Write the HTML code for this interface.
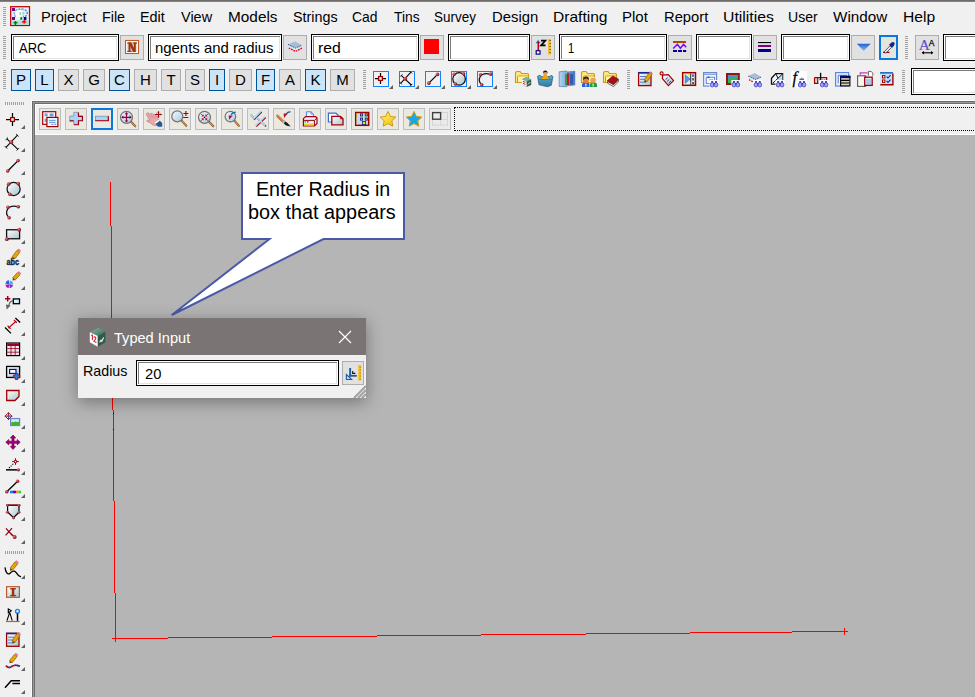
<!DOCTYPE html><html><head><meta charset="utf-8"><title>Typed Input</title><style>
html,body{margin:0;padding:0}
body{width:975px;height:697px;overflow:hidden;background:#f0f0f0;position:relative;font-family:"Liberation Sans",sans-serif;font-size:15px;color:#000}
.a{position:absolute}
.t{position:absolute;white-space:nowrap;line-height:17px;height:17px;transform-origin:0 50%}
.in{position:absolute;box-sizing:border-box;background:#fff;border:1px solid #000;box-shadow:inset 0 0 0 1px #fff, inset 2px 2px 0 0 #7c7c7c, inset -1px -1px 0 1px #e3e3e3}
.bt{position:absolute;box-sizing:border-box;background:#e1e1e1;border:1px solid #adadad}
.bs{position:absolute;box-sizing:border-box;background:#cce4f7;border:1px solid #005499}
.lb{position:absolute;box-sizing:border-box;text-align:center;line-height:20px;font-size:15px}
.vb{position:absolute;box-sizing:border-box;width:22px;height:22px;background:#ebe8e0;border:1px solid #bdbdbd}
.gv{position:absolute;width:3px;background:repeating-linear-gradient(to bottom,#a0a0a0 0 1px,transparent 1px 2px)}
.gh{position:absolute;height:3px;background:repeating-linear-gradient(to right,#a0a0a0 0 1px,transparent 1px 2px)}
.tri{position:absolute;width:0;height:0;border-left:4px solid transparent;border-bottom:4px solid #606060}
.sq{position:absolute;box-sizing:border-box;width:16px;height:16px;border:1px solid #1482ff}
</style></head><body>
<div class="a" style="left:0;top:0;width:975px;height:1px;background:#6f6b6a"></div><div class="a" style="left:0;top:1px;width:975px;height:1px;background:#858180"></div>
<div class="gv" style="left:3px;top:7px;height:20px"></div>
<div class="t" style="left:40.52px;top:7.5px;font-size:15px;transform:scaleX(0.9760);">Project</div>
<div class="t" style="left:101.65px;top:7.5px;font-size:15px;transform:scaleX(0.9550);">File</div>
<div class="t" style="left:139.84px;top:7.5px;font-size:15px;transform:scaleX(0.9580);">Edit</div>
<div class="t" style="left:181.30px;top:7.5px;font-size:15px;transform:scaleX(0.9658);">View</div>
<div class="t" style="left:227.68px;top:7.5px;font-size:15px;transform:scaleX(1.0244);">Models</div>
<div class="t" style="left:292.60px;top:7.5px;font-size:15px;transform:scaleX(0.9549);">Strings</div>
<div class="t" style="left:352.00px;top:7.5px;font-size:15px;transform:scaleX(0.9273);">Cad</div>
<div class="t" style="left:393.60px;top:7.5px;font-size:15px;transform:scaleX(0.9201);">Tins</div>
<div class="t" style="left:434.10px;top:7.5px;font-size:15px;transform:scaleX(0.8965);">Survey</div>
<div class="t" style="left:491.81px;top:7.5px;font-size:15px;transform:scaleX(0.9901);">Design</div>
<div class="t" style="left:552.76px;top:7.5px;font-size:15px;transform:scaleX(1.0375);">Drafting</div>
<div class="t" style="left:622.00px;top:7.5px;font-size:15px;transform:scaleX(1.0008);">Plot</div>
<div class="t" style="left:663.62px;top:7.5px;font-size:15px;transform:scaleX(0.9832);">Report</div>
<div class="t" style="left:723.35px;top:7.5px;font-size:15px;transform:scaleX(1.0547);">Utilities</div>
<div class="t" style="left:788.26px;top:7.5px;font-size:15px;transform:scaleX(0.9389);">User</div>
<div class="t" style="left:833.30px;top:7.5px;font-size:15px;transform:scaleX(1.0165);">Window</div>
<div class="t" style="left:902.76px;top:7.5px;font-size:15px;transform:scaleX(1.0438);">Help</div>
<div class="gv" style="left:3px;top:36px;height:24px"></div>
<div class="in" style="left:11px;top:34px;width:108px;height:27px"></div>
<div class="bt" style="left:120px;top:35px;width:24px;height:25px"></div>
<div class="in" style="left:148px;top:34px;width:134px;height:27px"></div>
<div class="bt" style="left:283px;top:35px;width:24px;height:25px"></div>
<div class="in" style="left:311px;top:34px;width:108px;height:27px"></div>
<div class="bt" style="left:420px;top:35px;width:24px;height:25px"></div>
<div class="in" style="left:448px;top:34px;width:82px;height:27px"></div>
<div class="bt" style="left:531px;top:35px;width:24px;height:25px"></div>
<div class="in" style="left:559px;top:34px;width:108px;height:27px"></div>
<div class="bt" style="left:668px;top:35px;width:24px;height:25px"></div>
<div class="in" style="left:696px;top:34px;width:56px;height:27px"></div>
<div class="bt" style="left:753px;top:35px;width:24px;height:25px"></div>
<div class="in" style="left:781px;top:34px;width:69px;height:27px"></div>
<div class="bt" style="left:851px;top:35px;width:24px;height:25px"></div>
<div class="a" style="left:879px;top:35px;width:19px;height:25px;box-sizing:border-box;border:2px solid #0a78dc;background:#e6e4df"></div>
<div class="gv" style="left:905px;top:36px;height:24px"></div>
<div class="bt" style="left:915px;top:35px;width:24px;height:25px"></div>
<div class="in" style="left:943px;top:34px;width:47px;height:27px"></div>
<div class="t" style="left:19.10px;top:39px;font-size:15px;transform:scaleX(0.8638);">ARC</div>
<div class="t" style="left:155.41px;top:39px;font-size:15px;transform:scaleX(0.9936);">ngents and radius</div>
<div class="t" style="left:318.15px;top:39px;font-size:15px;transform:scaleX(1.0522);">red</div>
<div class="t" style="left:568.06px;top:39px;font-size:15px;transform:scaleX(0.7429);">1</div>
<div class="a" style="left:424px;top:39px;width:15px;height:15px;background:#ff0000"></div>
<div class="gv" style="left:3px;top:70px;height:20px"></div>
<div class="bs lb" style="left:11px;top:69px;width:20px;height:22px">P</div>
<div class="bs lb" style="left:35px;top:69px;width:19px;height:22px">L</div>
<div class="bt lb" style="left:58px;top:69px;width:21px;height:22px">X</div>
<div class="bt lb" style="left:83px;top:69px;width:22px;height:22px">G</div>
<div class="bs lb" style="left:109px;top:69px;width:21px;height:22px">C</div>
<div class="bt lb" style="left:134px;top:69px;width:23px;height:22px">H</div>
<div class="bt lb" style="left:161px;top:69px;width:20px;height:22px">T</div>
<div class="bt lb" style="left:185px;top:69px;width:20px;height:22px">S</div>
<div class="bs lb" style="left:209px;top:69px;width:16px;height:22px">I</div>
<div class="bt lb" style="left:229px;top:69px;width:23px;height:22px">D</div>
<div class="bs lb" style="left:256px;top:69px;width:19px;height:22px">F</div>
<div class="bt lb" style="left:279px;top:69px;width:22px;height:22px">A</div>
<div class="bs lb" style="left:305px;top:69px;width:21px;height:22px">K</div>
<div class="bt lb" style="left:330px;top:69px;width:25px;height:22px">M</div>
<div class="gv" style="left:363px;top:70px;height:20px"></div>
<div class="sq" style="left:373px;top:71px"></div><div class="tri" style="left:389px;top:85px"></div>
<div class="sq" style="left:399px;top:71px"></div><div class="tri" style="left:415px;top:85px"></div>
<div class="sq" style="left:425px;top:71px"></div><div class="tri" style="left:441px;top:85px"></div>
<div class="sq" style="left:451px;top:71px"></div><div class="tri" style="left:467px;top:85px"></div>
<div class="sq" style="left:477px;top:71px"></div><div class="tri" style="left:493px;top:85px"></div>
<div class="gv" style="left:505px;top:70px;height:20px"></div>
<div class="gv" style="left:627px;top:70px;height:20px"></div>
<div class="gv" style="left:902px;top:70px;height:24px"></div>
<div class="in" style="left:911px;top:68px;width:79px;height:27px"></div>
<div class="gh" style="left:5px;top:102px;width:20px"></div>
<div class="gh" style="left:5px;top:551px;width:20px"></div>
<div class="tri" style="left:21px;top:125px"></div>
<div class="tri" style="left:21px;top:148px"></div>
<div class="tri" style="left:21px;top:171px"></div>
<div class="tri" style="left:21px;top:194px"></div>
<div class="tri" style="left:21px;top:217px"></div>
<div class="tri" style="left:21px;top:240px"></div>
<div class="tri" style="left:21px;top:263px"></div>
<div class="tri" style="left:21px;top:286px"></div>
<div class="tri" style="left:21px;top:309px"></div>
<div class="tri" style="left:21px;top:332px"></div>
<div class="tri" style="left:21px;top:356px"></div>
<div class="tri" style="left:21px;top:379px"></div>
<div class="tri" style="left:21px;top:402px"></div>
<div class="tri" style="left:21px;top:425px"></div>
<div class="tri" style="left:21px;top:448px"></div>
<div class="tri" style="left:21px;top:471px"></div>
<div class="tri" style="left:21px;top:494px"></div>
<div class="tri" style="left:21px;top:517px"></div>
<div class="tri" style="left:21px;top:540px"></div>
<div class="tri" style="left:21px;top:575px"></div>
<div class="tri" style="left:21px;top:598px"></div>
<div class="tri" style="left:21px;top:621px"></div>
<div class="tri" style="left:21px;top:644px"></div>
<div class="tri" style="left:21px;top:667px"></div>
<div class="tri" style="left:21px;top:690px"></div>
<div class="a" style="left:31px;top:100px;width:950px;height:600px;background:#fcfcfc"></div>
<div class="a" style="left:32px;top:101px;width:950px;height:600px;background:#6c6c6c"></div>
<div class="a" style="left:33px;top:102px;width:950px;height:600px;background:#9a9a9a"></div>
<div class="a" style="left:34px;top:103px;width:950px;height:600px;background:#6e6e6e"></div>
<div class="a" style="left:35px;top:104px;width:950px;height:31px;background:#f0f0f0;box-sizing:border-box;border:1px solid #fdfdfd"></div>
<div class="a" style="left:35px;top:135px;width:950px;height:600px;background:#b5b5b5"></div>
<div class="vb" style="left:39px;top:108px"></div>
<div class="vb" style="left:65px;top:108px"></div>
<div class="vb" style="left:91px;top:108px;border:2px solid #0a78dc"></div>
<div class="vb" style="left:117px;top:108px"></div>
<div class="vb" style="left:143px;top:108px"></div>
<div class="vb" style="left:169px;top:108px"></div>
<div class="vb" style="left:195px;top:108px"></div>
<div class="vb" style="left:221px;top:108px"></div>
<div class="vb" style="left:247px;top:108px"></div>
<div class="vb" style="left:273px;top:108px"></div>
<div class="vb" style="left:299px;top:108px"></div>
<div class="vb" style="left:325px;top:108px"></div>
<div class="vb" style="left:351px;top:108px"></div>
<div class="vb" style="left:377px;top:108px"></div>
<div class="vb" style="left:403px;top:108px"></div>
<div class="vb" style="left:429px;top:108px;background:#ebebeb"></div>
<div class="a" style="left:454px;top:107px;width:540px;height:24px;box-sizing:border-box;border:1px dotted #000"></div>
<div class="a" style="left:110px;top:182px;width:1px;height:44px;background:#ff0000"></div>
<div class="a" style="left:111px;top:226px;width:1px;height:92px;background:#ff0000"></div>
<div class="a" style="left:112px;top:318px;width:1px;height:92px;background:#ff0000"></div>
<div class="a" style="left:113px;top:410px;width:1px;height:91px;background:#ff0000"></div>
<div class="a" style="left:114px;top:501px;width:1px;height:92px;background:#ff0000"></div>
<div class="a" style="left:115px;top:593px;width:1px;height:49px;background:#ff0000"></div>
<div class="a" style="left:112px;top:638px;width:56px;height:1px;background:#ff0000"></div>
<div class="a" style="left:168px;top:637px;width:104px;height:1px;background:#ff0000"></div>
<div class="a" style="left:272px;top:636px;width:105px;height:1px;background:#ff0000"></div>
<div class="a" style="left:377px;top:635px;width:104px;height:1px;background:#ff0000"></div>
<div class="a" style="left:481px;top:634px;width:105px;height:1px;background:#ff0000"></div>
<div class="a" style="left:586px;top:633px;width:104px;height:1px;background:#ff0000"></div>
<div class="a" style="left:690px;top:632px;width:102px;height:1px;background:#ff0000"></div>
<div class="a" style="left:792px;top:631px;width:56px;height:1px;background:#ff0000"></div>
<div class="a" style="left:844px;top:628px;width:1px;height:7px;background:#ff0000"></div>
<div class="a" style="left:113px;top:413px;width:1px;height:1px;background:#1a0000"></div>
<div class="a" style="left:113px;top:429px;width:1px;height:1px;background:#1a0000"></div>
<svg class="a" style="left:160px;top:160px" width="260" height="170" viewBox="160 160 260 170">
<path d="M242 173 H404 V239 H323.5 L171.8 315 L269.5 239 H242 Z" fill="#fff" stroke="#4c59a8" stroke-width="2" stroke-linejoin="miter"/></svg>
<div class="t" style="left:255.62px;top:177.6px;font-size:20px;transform:scaleX(0.9821);line-height:23px;height:23px;">Enter Radius in</div>
<div class="t" style="left:247.51px;top:200.6px;font-size:20px;transform:scaleX(0.9913);line-height:23px;height:23px;">box that appears</div>
<div class="a" style="left:78px;top:318px;width:288px;height:80px;background:#f0f0f0;box-shadow:0 4px 16px 0 rgba(0,0,0,0.36)"></div>
<div class="a" style="left:78px;top:318px;width:288px;height:37px;background:#7a7574"></div>
<div class="t" style="left:113.50px;top:329px;font-size:15px;transform:scaleX(0.9719);color:#fff;">Typed Input</div>
<div class="t" style="left:82.55px;top:362px;font-size:15px;transform:scaleX(0.9515);">Radius</div>
<div class="in" style="left:136px;top:360px;width:203px;height:26px"></div>
<div class="t" style="left:144.50px;top:365px;font-size:15px;transform:scaleX(0.9791);">20</div>
<div class="bt" style="left:342px;top:361px;width:22px;height:24px"></div>
<svg class="a" style="left:338px;top:330px" width="14" height="14" viewBox="0 0 14 14"><path d="M1 1 L13 13 M13 1 L1 13" stroke="#fff" stroke-width="1.2" fill="none"/></svg>
<svg class="a" style="left:352px;top:384px" width="14" height="14" viewBox="0 0 14 14"><path d="M14 2 L2 14 M14 6 L6 14 M14 10 L10 14" stroke="#a4a4a4" stroke-width="2.2" fill="none"/></svg>
<svg class="a" style="left:0;top:0" width="975" height="697" viewBox="0 0 975 697"><defs>
<radialGradient id="rb" cx="35%" cy="35%" r="70%"><stop offset="0" stop-color="#e88088"/><stop offset="0.6" stop-color="#b02838"/><stop offset="1" stop-color="#701018"/></radialGradient>
<linearGradient id="gl" x1="0" y1="0" x2="1" y2="1"><stop offset="0" stop-color="#ffffff"/><stop offset="1" stop-color="#a9c3cc"/></linearGradient>
<linearGradient id="lens" x1="0" y1="0" x2="1" y2="1"><stop offset="0" stop-color="#f4faff"/><stop offset="1" stop-color="#a9c8e2"/></linearGradient>
<linearGradient id="fold" x1="0" y1="0" x2="0" y2="1"><stop offset="0" stop-color="#fff6b0"/><stop offset="1" stop-color="#f5cf58"/></linearGradient>
<linearGradient id="tri" x1="0" y1="0" x2="0" y2="1"><stop offset="0" stop-color="#1f62d0"/><stop offset="1" stop-color="#8fbcff"/></linearGradient>
<linearGradient id="cubet" x1="0" y1="0" x2="1" y2="1"><stop offset="0" stop-color="#86b8a2"/><stop offset="1" stop-color="#2f6b55"/></linearGradient>
<linearGradient id="star" x1="0" y1="0" x2="1" y2="1"><stop offset="0" stop-color="#fff27a"/><stop offset="1" stop-color="#f2c200"/></linearGradient>
<linearGradient id="bluef" x1="0" y1="0" x2="0" y2="1"><stop offset="0" stop-color="#62a8c8"/><stop offset="1" stop-color="#2f7aa6"/></linearGradient>
<linearGradient id="book" x1="0" y1="0" x2="1" y2="0"><stop offset="0" stop-color="#b8d4f0"/><stop offset="1" stop-color="#3f74b8"/></linearGradient>
</defs>
<rect x="10.7" y="6.7" width="18.8" height="18.8" fill="#e4f3f6" stroke="#c40000" stroke-width="1.25"/>
<rect x="12" y="20.5" width="17" height="4.5" fill="#b0dcdc"/>
<path d="M15.5 11Q19 8 24 9.5Q28 11 27 14.5Q26 17 23 16.5" fill="none" stroke="#5b9ad8" stroke-width="1.6" stroke-dasharray="2.2 1"/>
<path d="M13.5 12.5Q16 14 15 17" fill="none" stroke="#6a9ae0" stroke-width="1.2"/>
<ellipse cx="18.5" cy="13.5" rx="3.3" ry="3.6" fill="#fff"/>
<rect x="19.5" y="12" width="1.6" height="3" fill="#a0d8b0"/><rect x="22.3" y="12" width="2.2" height="2.6" fill="#b8c8d8"/>
<rect x="12" y="8" width="3" height="3" fill="#800080"/><rect x="12" y="17" width="3" height="3" fill="#800080"/>
<rect x="23.8" y="17" width="2.6" height="3.2" fill="#000088"/><rect x="20.3" y="17.2" width="2" height="2.6" fill="#0a7a20"/>
<rect x="14.7" y="21" width="1.5" height="4.3" fill="#008000"/><rect x="13.6" y="22" width="3.8" height="1.4" fill="#008000"/>
<rect x="22" y="21.2" width="4.2" height="1.4" fill="#ff0000"/><rect x="23.5" y="19.8" width="1.4" height="3.8" fill="#ff0000"/>
<rect x="125.5" y="40.5" width="13" height="13" fill="#fff" stroke="#c8581e" stroke-width="1.1"/>
<rect x="127" y="42" width="10" height="10" fill="#cde6f6"/>
<g fill="#a83200"><rect x="128.5" y="42.6" width="2" height="9.4"/><rect x="133.8" y="42.6" width="2" height="9.4"/><path d="M128.5 42.6H131.4L135.8 52H132.9Z"/><rect x="127.3" y="42.5" width="3.4" height="1.1"/><rect x="127.3" y="50.9" width="4.4" height="1.1"/><rect x="132.6" y="42.5" width="4.4" height="1.1"/></g>
<path d="M288 46.6L295 43.2L302 46.6L295.5 51.2Z" fill="#c4eeff"/>
<path d="M288 44.4L295 41.2L301.8 45.3L295.5 48Z" fill="#a9bcd9"/>
<path d="M288 44.4L295.5 48L301.8 45.3" fill="none" stroke="#4a5468" stroke-width="1" stroke-dasharray="1.6 0.9"/>
<path d="M288.8 48L295.5 51.4L302.2 48" fill="none" stroke="#f00000" stroke-width="1.3" stroke-dasharray="1.7 0.9"/>
<path d="M538.2 39.8L540.8 43.2H535.6Z" fill="#2a6fe0"/>
<rect x="537.5" y="42" width="1.5" height="8.8" fill="#c00000"/>
<rect x="536.2" y="50.7" width="3.8" height="3.4" fill="#fff" stroke="#00008b" stroke-width="1.2"/>
<path d="M541 40.7H545.3L541 45.4H545.5" fill="none" stroke="#000" stroke-width="1.7"/>
<rect x="548" y="39" width="3" height="15.6" fill="#f2bc3c"/>
<path d="M549.3 40.5h1.7M549.3 43.5h1.7M549.3 46.5h1.7M549.3 49.5h1.7M549.3 52.5h1.7" stroke="#7a5a10" stroke-width="0.9"/>
<rect x="673" y="41" width="13" height="2" fill="#a84a00"/>
<path d="M673.2 48.6L677.4 44.3L680.4 48.2L683.5 44.3L686.2 47.3" fill="none" stroke="#8000ff" stroke-width="1.5"/>
<path d="M673 51H686.2" stroke="#000090" stroke-width="2" stroke-dasharray="4 1"/>
<rect x="758" y="42" width="13" height="1.1" fill="#000"/><rect x="758" y="45" width="13" height="2" fill="#800080"/><rect x="758" y="49" width="13" height="3" fill="#000090"/>
<path d="M856.8 43.8H870.6L863.7 51Z" fill="url(#tri)"/>
<path d="M883 52.4h6.5" stroke="#a00010" stroke-width="1.3"/>
<path d="M884.2 51.8L890 45.8L891.6 47.4L885.8 53Z" fill="#e8eef4" stroke="#303848" stroke-width="0.8"/>
<path d="M889 44.8L891.2 42.8Q893 41.4 894.2 42.6Q895.4 43.8 894 45.6L892 47.8Z" fill="#14287a"/>
<text x="924.3" y="50" text-anchor="middle" font-family="Liberation Serif" font-size="15.5" fill="#6050c8" stroke="#6050c8" stroke-width="0.15">A</text>
<text x="931.6" y="46" text-anchor="middle" font-family="Liberation Sans" font-size="8.5" fill="#000" stroke="#000" stroke-width="0.25">A</text>
<path d="M922.5 52.8H932.5" stroke="#000" stroke-width="1.1"/><path d="M921.6 52.8l2.4 -1.7v3.4ZM933.4 52.8l-2.4 -1.7v3.4Z" fill="#000"/>
<path d="M375.0 78.5H386.0M380.5 73.0V84.0" stroke="#000" stroke-width="1.25"/>
<rect x="378.6" y="76.6" width="3.8" height="3.8" fill="#e4f2fa" stroke="#a00000" stroke-width="1.25"/>
<path d="M401.43 75.55L411.33 85.00M410.97 72.22L400.62 83.29" stroke="#000" stroke-width="1.05" fill="none"/>
<path d="M400.26 76.54L402.42 74.38M410.16 86.08L412.32 83.92M409.80 71.23L411.96 73.39M399.54 82.12L401.70 84.28" stroke="#000" stroke-width="0.95" fill="none"/>
<circle cx="405.3" cy="78.7" r="1.96" fill="url(#rb)"/>
<path d="M428.80 83.15L437.54 74.42" stroke="#000" stroke-width="1.25"/>
<circle cx="428.8" cy="83.15" r="1.8" fill="url(#rb)"/>
<circle cx="437.54" cy="74.42" r="1.8" fill="url(#rb)"/>
<circle cx="459.1" cy="78.9" r="6.29" fill="url(#gl)" stroke="#111" stroke-width="1.25"/>
<circle cx="454.288" cy="74.292" r="1.8" fill="url(#rb)"/>
<circle cx="463.6" cy="73.81200000000001" r="1.8" fill="url(#rb)"/>
<circle cx="455.44" cy="83.988" r="1.8" fill="url(#rb)"/>
<path d="M481.70 84.63C477.05 80.45 479.18 71.24 490.63 74.15Z" fill="#e8eff6" stroke="none"/>
<path d="M481.70 84.63C477.05 80.45 479.18 71.24 490.63 74.15" fill="none" stroke="#111" stroke-width="1.25"/>
<circle cx="480.54" cy="74.73" r="1.8" fill="url(#rb)"/>
<circle cx="490.63" cy="74.15" r="1.8" fill="url(#rb)"/>
<circle cx="481.7" cy="84.82" r="1.8" fill="url(#rb)"/>
<path d="M515.5 73Q515.5 71.5 517 71.5H520L521.5 73.5H527.5Q528.5 73.5 528.5 75V82.5H515.5Z" fill="#ffe680" stroke="#d2961c" stroke-width="1.1"/>
<path d="M517.5 82.5V77Q517.5 76 518.8 76H528.5" fill="none" stroke="#d2961c" stroke-width="1"/>
<rect x="518" y="76.6" width="10" height="5.5" fill="#fff3a8"/>
<path d="M526.5 77.2L531.2 79.5V85L526.5 87L522 84.5V79.3Z" fill="#2f5e4b"/>
<path d="M526.5 77.2L531.2 79.5L526.6 81.6L522 79.3Z" fill="#7fb29c"/>
<path d="M522 79.3L526.6 81.6V87L522 84.5Z" fill="#fff"/>
<path d="M523 81.3l2.4 1.2M523 83.3l2.4 1.2" stroke="#e03040" stroke-width="1.1"/>
<path d="M527.8 84.5l2.4 -2.4" stroke="#e8f0ea" stroke-width="0.9"/>
<path d="M537.5 76.2L540 75.2L541 76.5H550L551 75.2L553 76.5L551.3 85.3L547.5 86.8L539 84.8Z" fill="url(#bluef)" stroke="#1f5a80" stroke-width="0.7"/>
<path d="M541.8 79L543.2 75.3Q545 74 547.2 75.4L548.6 79Z" fill="#f0a800"/>
<circle cx="545.2" cy="73.2" r="2.2" fill="#e8a060"/><path d="M543 73Q543 70.6 545.3 70.6Q547.6 70.6 547.5 73.2Q546.5 71.8 545 72.2Q543.6 72.2 543 73Z" fill="#1a1208"/>
<path d="M538.5 79.5H552" stroke="#2a6a90" stroke-width="0.8" opacity=".6"/>
<path d="M559.2 71.8L566.5 71L567 72L574.8 71.2V85L567 85.8L566.5 86.8L559.2 86.5Z" fill="url(#book)" stroke="#3a6cb0" stroke-width="0.6"/>
<rect x="565" y="74" width="2" height="11" fill="#3a9a40"/><rect x="567" y="73.2" width="2.2" height="11.8" fill="#c01828"/><rect x="570" y="74" width="3" height="10.5" fill="#3858b8"/>
<path d="M581.5 73Q581.5 71.5 583 71.5H586L587.5 73.5H593.5Q594.5 73.5 594.5 75V82.5H581.5Z" fill="#ffe680" stroke="#d2961c" stroke-width="1.1"/>
<path d="M583.5 82.5V77Q583.5 76 584.8 76H594.5" fill="none" stroke="#d2961c" stroke-width="1"/>
<rect x="584" y="76.6" width="10" height="5.5" fill="#fff3a8"/>
<path d="M582 87V84.5Q582 82.6 584.5 82.6H587Q589.5 82.6 589.5 84.5V87Z" fill="#2a60e0"/>
<path d="M590 87V84.5Q590 82.6 592.3 82.6H594.6Q597 82.6 597 84.5V87Z" fill="#20a040"/>
<circle cx="586" cy="80" r="2.9" fill="#e0803a"/><path d="M583 80Q582.8 76.6 586 76.6Q589.2 76.6 589 80Q588 78.3 586 78.4Q584 78.4 583 80Z" fill="#3a2010"/>
<circle cx="593" cy="80" r="2.8" fill="#f0a050"/><path d="M590.3 79Q590.6 76.8 593 76.8Q595.4 76.8 595.7 79Q594.4 78 593 78.1Q591.6 78 590.3 79Z" fill="#e8d8b8"/>
<path d="M592.6 83.5h1v3h-1z" fill="#fff"/><path d="M585.3 83.5h1.2v3h-1.2z" fill="#dfe8ff"/>
<path d="M603.5 73Q603.5 71.5 605 71.5H608L609.5 73.5H615.5Q616.5 73.5 616.5 75V82.5H603.5Z" fill="#ffe680" stroke="#d2961c" stroke-width="1.1"/>
<path d="M605.5 82.5V77Q605.5 76 606.8 76H616.5" fill="none" stroke="#d2961c" stroke-width="1"/>
<rect x="606" y="76.6" width="10" height="5.5" fill="#fff3a8"/>
<path d="M607.5 81.5L613.5 84.8L618.5 80.2V81.8L613.5 86.6L607.5 83.2Z" fill="#fff" stroke="#301008" stroke-width="0.6"/>
<path d="M607.2 80.8L612.8 76L618.6 79.2L613.4 84.6Z" fill="#a81018" stroke="#600810" stroke-width="0.6"/>
<rect x="638.6" y="72.6" width="12.4" height="13" fill="url(#gl)" stroke="#a00000" stroke-width="1.3"/>
<rect x="638" y="72" width="11" height="1.6" fill="#1a2a90"/>
<path d="M640 76.5h6M640 79.3h5M640 82.2h6" stroke="#5a78d0" stroke-width="1"/>
<path d="M644.5 82.5L647.1 81.7L644.3 79.7Z" fill="#5a3a10"/>
<path d="M647.1 81.7L651.9 74.8L649.1 72.9L644.3 79.7Z" fill="#e6a800" stroke="#8a5a08" stroke-width="0.7"/>
<path d="M651.9 74.8L653.0 73.2L650.2 71.2L649.1 72.9Z" fill="#e07890"/>
<path d="M662.6 75.2L668.3 74.6L673.6 80.6L668.4 85.6L662.4 78.6Z" fill="url(#gl)" stroke="#a00000" stroke-width="1.2" stroke-linejoin="round"/>
<circle cx="661.6" cy="73.4" r="1.5" fill="#fff" stroke="#a00000" stroke-width="1.1"/>
<path d="M665.6 79.6l2 -1.8M667.2 81.3l2 -1.8M668.8 83l2 -1.8" stroke="#1a2ab0" stroke-width="1"/>
<rect x="682.7" y="72.7" width="12.8" height="12.6" fill="#d6f0fa" stroke="#a00000" stroke-width="1.5"/>
<path d="M685.3 75L690 79L685.3 83.2Z" fill="#5a9ae8" stroke="#2a5ab0" stroke-width="0.6"/>
<path d="M690.7 73.5V84.5" stroke="#101010" stroke-width="0.9"/>
<rect x="692" y="74.6" width="2" height="1.9" fill="#101060"/><rect x="692.5" y="75.0" width="1" height="1" fill="#f0e020"/>
<rect x="692" y="78.4" width="2" height="1.9" fill="#101060"/><rect x="692.5" y="78.80000000000001" width="1" height="1" fill="#f0e020"/>
<rect x="692" y="82.2" width="2" height="1.9" fill="#101060"/><rect x="692.5" y="82.60000000000001" width="1" height="1" fill="#f0e020"/>
<rect x="683.6" y="73.8" width="1.5" height="1.5" fill="#f0e020"/><rect x="683.6" y="82.8" width="1.5" height="1.5" fill="#f0e020"/><rect x="690.6" y="82" width="1.6" height="1.6" fill="#f0e020"/><rect x="688" y="73.8" width="1.3" height="1.3" fill="#f0e020"/>
<rect x="703.6" y="72.6" width="13" height="13.5" fill="#eef6ff" stroke="#6a8ad0" stroke-width="1.2"/>
<path d="M704 74.3H716.5" stroke="#7a9ae0" stroke-width="1.2"/>
<path d="M706.3 77.3H714.6V80M706.3 77.3V83.5H710" fill="none" stroke="#6a8ad0" stroke-width="1.1"/>
<rect x="707.5" y="76.6" width="2" height="1.2" fill="#1030d0"/><rect x="709.5" y="79.4" width="1.3" height="1" fill="#e02020"/><rect x="711.5" y="79.4" width="1.3" height="1" fill="#e02020"/>
<rect x="709.5" y="80" width="9" height="7.5" fill="#fff" opacity="0.9"/>
<ellipse cx="712.2" cy="84.8" rx="1.9" ry="2.2" fill="#a4a4f6" stroke="#4a4ac4" stroke-width="0.9"/>
<ellipse cx="716" cy="84.8" rx="1.9" ry="2.2" fill="#a4a4f6" stroke="#4a4ac4" stroke-width="0.9"/>
<rect x="711.2" y="81" width="2" height="2" fill="#4848c8"/><rect x="715" y="81" width="2" height="2" fill="#4848c8"/>
<rect x="713.4" y="83" width="1.4" height="1.6" fill="#3838b8"/>
<rect x="727" y="74" width="11.8" height="10" fill="#3fb050" stroke="#8b1a10" stroke-width="2"/>
<path d="M728 75H738V78.5Q735.5 75.6 733.2 78Q731 76 728 79.5Z" fill="#4a90d8"/>
<rect x="731.3" y="80" width="9" height="7.5" fill="#fff" opacity="0.9"/>
<ellipse cx="734.0" cy="84.8" rx="1.9" ry="2.2" fill="#a4a4f6" stroke="#4a4ac4" stroke-width="0.9"/>
<ellipse cx="737.8" cy="84.8" rx="1.9" ry="2.2" fill="#a4a4f6" stroke="#4a4ac4" stroke-width="0.9"/>
<rect x="733.0" y="81" width="2" height="2" fill="#4848c8"/><rect x="736.8" y="81" width="2" height="2" fill="#4848c8"/>
<rect x="735.1999999999999" y="83" width="1.4" height="1.6" fill="#3838b8"/>
<path d="M748.2 76L754.8 73L761.4 77L755.2 79.6Z" fill="#a9bcd9"/>
<path d="M748.2 76L755.2 79.6L761.4 77" fill="none" stroke="#4a5468" stroke-width="1" stroke-dasharray="1.6 0.9"/>
<path d="M749 79.6L753.5 82" stroke="#f00000" stroke-width="1.3" stroke-dasharray="1.7 0.9"/><path d="M749 78.2L754.5 81" stroke="#c4eeff" stroke-width="1.4"/>
<rect x="753.3" y="80" width="9" height="7.5" fill="#fff" opacity="0.9"/>
<ellipse cx="756.0" cy="84.8" rx="1.9" ry="2.2" fill="#a4a4f6" stroke="#4a4ac4" stroke-width="0.9"/>
<ellipse cx="759.8" cy="84.8" rx="1.9" ry="2.2" fill="#a4a4f6" stroke="#4a4ac4" stroke-width="0.9"/>
<rect x="755.0" y="81" width="2" height="2" fill="#4848c8"/><rect x="758.8" y="81" width="2" height="2" fill="#4848c8"/>
<rect x="757.1999999999999" y="83" width="1.4" height="1.6" fill="#3838b8"/>
<path d="M771.5 78.3L775.8 73.6H782.6V80.5L778 84.2H771.5Z" fill="#f4f8fa" stroke="#101010" stroke-width="1.3"/>
<path d="M778 78.2L782.4 74L782.4 80.4L778 84Z" fill="#bcdcec"/>
<path d="M775.8 73.6L778 78.3M782.4 74L773 83" stroke="#101010" stroke-width="1"/>
<rect x="775.5" y="80" width="9" height="7.5" fill="#fff" opacity="0.9"/>
<ellipse cx="778.2" cy="84.8" rx="1.9" ry="2.2" fill="#a4a4f6" stroke="#4a4ac4" stroke-width="0.9"/>
<ellipse cx="782" cy="84.8" rx="1.9" ry="2.2" fill="#a4a4f6" stroke="#4a4ac4" stroke-width="0.9"/>
<rect x="777.2" y="81" width="2" height="2" fill="#4848c8"/><rect x="781" y="81" width="2" height="2" fill="#4848c8"/>
<rect x="779.4" y="83" width="1.4" height="1.6" fill="#3838b8"/>
<rect x="791" y="71" width="16" height="16" fill="#fff"/>
<text x="792.6" y="83" font-family="Liberation Serif" font-style="italic" font-size="16" fill="#000" stroke="#000" stroke-width="0.3">f</text>
<path d="M799.5 79.2h4.6" stroke="#202020" stroke-width="1"/><path d="M801.8 77.6v3.2" stroke="#606060" stroke-width="0.8"/>
<rect x="797.5" y="80" width="9" height="7.5" fill="#fff" opacity="0.9"/>
<ellipse cx="800.2" cy="84.8" rx="1.9" ry="2.2" fill="#a4a4f6" stroke="#4a4ac4" stroke-width="0.9"/>
<ellipse cx="804" cy="84.8" rx="1.9" ry="2.2" fill="#a4a4f6" stroke="#4a4ac4" stroke-width="0.9"/>
<rect x="799.2" y="81" width="2" height="2" fill="#4848c8"/><rect x="803" y="81" width="2" height="2" fill="#4848c8"/>
<rect x="801.4" y="83" width="1.4" height="1.6" fill="#3838b8"/>
<path d="M817.6 83V77.6H826.6V82M814.6 77.6V83.3H818.5" fill="none" stroke="#a00000" stroke-width="1.3"/><path d="M814.6 77.6H817.6" stroke="#a00000" stroke-width="1.3"/>
<path d="M820.6 72.8V80" stroke="#000" stroke-width="1.3"/><path d="M816.5 79.8H826" stroke="#4a6af0" stroke-width="1" stroke-dasharray="1.6 0.8"/>
<rect x="819.5" y="80" width="9" height="7.5" fill="#fff" opacity="0.9"/>
<ellipse cx="822.2" cy="84.8" rx="1.9" ry="2.2" fill="#a4a4f6" stroke="#4a4ac4" stroke-width="0.9"/>
<ellipse cx="826" cy="84.8" rx="1.9" ry="2.2" fill="#a4a4f6" stroke="#4a4ac4" stroke-width="0.9"/>
<rect x="821.2" y="81" width="2" height="2" fill="#4848c8"/><rect x="825" y="81" width="2" height="2" fill="#4848c8"/>
<rect x="823.4" y="83" width="1.4" height="1.6" fill="#3838b8"/>
<rect x="835.6" y="72.6" width="13" height="13.4" fill="#eef6ff" stroke="#5a86e0" stroke-width="1.2"/>
<path d="M838 75.3H847M838.2 75.3V83.6" fill="none" stroke="#5a86e0" stroke-width="1.1"/>
<rect x="840.6" y="76.3" width="9.3" height="9.6" fill="#d8d0a8" stroke="#000" stroke-width="1.1"/>
<rect x="840" y="75.8" width="10.4" height="2.3" fill="#000080"/>
<path d="M841 80.4h8.4M841 83h8.4" stroke="#000" stroke-width="1.1"/>
<rect x="857.6" y="75.8" width="8" height="10.6" fill="#fbf7e8" stroke="#585858" stroke-width="1.1"/>
<path d="M860.3 74.8V72.9H867.6" fill="none" stroke="#c040c0" stroke-width="1.3"/>
<path d="M868.4 75.8V71.4H871.2L872.8 73.2V75.8" fill="#fff" stroke="#585858" stroke-width="0.9"/>
<rect x="864.7" y="77.2" width="7.5" height="8.2" fill="#dceefa" stroke="#a00010" stroke-width="1.3"/>
<path d="M866 80h5M866 82h5M866 84h5" stroke="#6a8ad8" stroke-width="0.8"/>
<rect x="880.3" y="72.4" width="12.5" height="12.3" fill="#c4e4f2"/>
<path d="M880.3 84.8H892.9V73.5" fill="none" stroke="#a00000" stroke-width="1.4"/>
<rect x="880" y="72" width="13" height="1.7" fill="#2a70c8"/>
<rect x="882.5" y="75.5" width="2.4" height="2.4" fill="#fff" stroke="#a00000" stroke-width="1"/><rect x="882.5" y="80" width="2.4" height="2.4" fill="#fff" stroke="#a00000" stroke-width="1"/>
<path d="M886.6 76.6l1.4 1.4l2.6 -2.8M886.6 81l1.4 1.4l2.6 -2.8" fill="none" stroke="#1020c0" stroke-width="1.1"/>
<path d="M6.0 119.5H19.0M12.5 113.0V126.0" stroke="#000" stroke-width="1.25"/>
<rect x="10.6" y="117.6" width="3.8" height="3.8" fill="#e4f2fa" stroke="#a00000" stroke-width="1.25"/>
<path d="M6.90 138.85L17.90 149.35M17.50 135.15L6.00 147.45" stroke="#000" stroke-width="1.05" fill="none"/>
<path d="M5.60 139.95L8.00 137.55M16.60 150.55L19.00 148.15M16.20 134.05L18.60 136.45M4.80 146.15L7.20 148.55" stroke="#000" stroke-width="0.95" fill="none"/>
<circle cx="11.2" cy="142.35000000000002" r="2.0" fill="url(#rb)"/>
<path d="M7.70 171.00L18.10 160.60" stroke="#000" stroke-width="1.25"/>
<circle cx="7.7" cy="171.0" r="1.8" fill="url(#rb)"/>
<circle cx="18.1" cy="160.6" r="1.8" fill="url(#rb)"/>
<circle cx="13.6" cy="188.95000000000002" r="6.55" fill="url(#gl)" stroke="#111" stroke-width="1.25"/>
<circle cx="8.600000000000001" cy="184.15" r="1.8" fill="url(#rb)"/>
<circle cx="18.3" cy="183.65" r="1.8" fill="url(#rb)"/>
<circle cx="9.8" cy="194.25000000000003" r="1.8" fill="url(#rb)"/>
<path d="M9.10 217.50C4.30 213.20 6.50 203.70 18.30 206.70Z" fill="#e8eff6" stroke="none"/>
<path d="M9.10 217.50C4.30 213.20 6.50 203.70 18.30 206.70" fill="none" stroke="#111" stroke-width="1.25"/>
<circle cx="7.9" cy="207.3" r="1.8" fill="url(#rb)"/>
<circle cx="18.3" cy="206.7" r="1.8" fill="url(#rb)"/>
<circle cx="9.1" cy="217.7" r="1.8" fill="url(#rb)"/>
<rect x="6.6" y="229.75" width="13" height="9" fill="url(#gl)" stroke="#111" stroke-width="1.3"/>
<circle cx="19.2" cy="229.75" r="1.9" fill="url(#rb)"/>
<circle cx="6.8" cy="239.15" r="1.9" fill="url(#rb)"/>
<text x="12.7" y="265.2" text-anchor="middle" font-family="Liberation Sans" font-weight="bold" font-size="8.6" fill="#0c1c40" textLength="12.6" lengthAdjust="spacingAndGlyphs" stroke="#0c1c40" stroke-width="0.35">abc</text>
<path d="M12.3 259.4L15.0 258.7L12.3 256.6Z" fill="#5a3a10"/>
<path d="M15.0 258.7L19.8 252.2L17.0 250.2L12.3 256.6Z" fill="#e6a800" stroke="#8a5a08" stroke-width="0.7"/>
<path d="M19.8 252.2L21.0 250.6L18.2 248.6L17.0 250.2Z" fill="#e07890"/>
<path d="M12.6 280.4L15.3 279.9L12.8 277.6Z" fill="#5a3a10"/>
<path d="M15.3 279.9L19.9 274.9L17.4 272.6L12.8 277.6Z" fill="#e6a800" stroke="#8a5a08" stroke-width="0.7"/>
<path d="M19.9 274.9L21.3 273.4L18.7 271.1L17.4 272.6Z" fill="#e07890"/>
<path d="M9.3 284.25L5.500000000000001 283.65A3.9 3.9 0 0 1 8.9 280.35Z" fill="#2a62e0"/><path d="M9.3 284.25L9.9 280.45A3.9 3.9 0 0 1 13.200000000000001 283.85Z" fill="#38b8f0"/><path d="M9.3 284.25L13.100000000000001 284.85A3.9 3.9 0 0 1 9.700000000000001 288.15Z" fill="#7a30d0"/><path d="M9.3 284.25L8.700000000000001 288.05A3.9 3.9 0 0 1 5.4 284.65Z" fill="#a020c0"/>
<path d="M5 298.7h5.4M7.7 296.0v5.4" stroke="#a00020" stroke-width="1.5"/>
<rect x="13.3" y="298.9" width="6.2" height="4.8" fill="#d6f0fa" stroke="#000" stroke-width="1.3"/>
<path d="M13 300.9Q10 300.9 8.8 305.4" fill="none" stroke="#606060" stroke-width="1.2"/><path d="M6 304.5L10.6 305.5L6.6 309.5Z" fill="#606060"/>
<path d="M15.4 317.95000000000005L20.2 322.55000000000007M5 327.55000000000007L11 333.35" stroke="#000" stroke-width="1.3"/>
<path d="M8.4 328.15000000000003L16.2 320.95000000000005" stroke="#c00010" stroke-width="1.2"/><path d="M7.6 325.75000000000006l3 3M13.8 319.95000000000005l3 3" stroke="#c00010" stroke-width="1.1"/>
<rect x="6.6" y="343.0" width="13" height="12.6" fill="#e8ecf0" stroke="#000" stroke-width="1.2"/>
<rect x="7.2" y="343.59999999999997" width="11.8" height="2.4" fill="#a00020"/>
<path d="M7.2 348.59999999999997h11.8M7.2 352.2h11.8M11 343.59999999999997v11.6M15.2 343.59999999999997v11.6" stroke="#a00020" stroke-width="0.85"/>
<rect x="6.6" y="366.45" width="13" height="11" fill="url(#gl)" stroke="#000" stroke-width="1.3"/>
<rect x="9.6" y="369.45" width="6.4" height="4" fill="#fff" stroke="#0a0aa0" stroke-width="1.2"/>
<path d="M15.3 373.45h2.6v1.7h1.8v2.6h-1.8v1.7h-2.6v-1.7h-1.8v-2.6h1.8Z" fill="#2a78d8" stroke="#c00010" stroke-width="0.9"/>
<path d="M6.7 390.5H19V396.5L15 400.5H6.7Z" fill="url(#gl)" stroke="#a00000" stroke-width="1.3"/>
<path d="M8.5 412.75000000000006l3.4 3.4l-3.4 3.4l-3.4 -3.4Z" fill="none" stroke="#900010" stroke-width="0.9"/><path d="M8.5 412.35v7.6M4.7 416.15000000000003h7.6" stroke="#900010" stroke-width="0.8"/><rect x="7.5" y="415.15000000000003" width="2" height="2" fill="#2060d0"/>
<rect x="10.6" y="418.55" width="9" height="7" fill="#cfe8fa" stroke="#6a86c8" stroke-width="1.2"/>
<path d="M11.2 424.95000000000005V422.75000000000006Q12.6 420.75000000000006 14 422.55Q15.4 420.75000000000006 17 422.35L19 421.55V424.95000000000005Z" fill="#3cb030"/>
<path d="M13 435.0L15.7 438.0H14V441.2H17.2V439.5L20.2 442.2L17.2 444.9V443.2H14V446.4H15.7L13 449.4L10.3 446.4H12V443.2H8.8V444.9L5.8 442.2L8.8 439.5V441.2H12V438.0H10.3Z" fill="#900090" stroke="#8a0028" stroke-width="0.7" stroke-linejoin="round"/>
<path d="M15.5 458.25v6.6M12.2 461.55h6.6" stroke="#900010" stroke-width="1"/><path d="M13.9 459.95l3.2 3.2M17.1 459.95l-3.2 3.2" stroke="#900010" stroke-width="0.8"/><circle cx="15.5" cy="461.55" r="1.1" fill="#f0f0f0" stroke="#900010" stroke-width="0.8"/>
<path d="M9 468.05L13.5 463.65" stroke="#000" stroke-width="1.1" stroke-dasharray="1.2 1.2"/><path d="M6 469.85H18" stroke="#000" stroke-width="1.5"/>
<circle cx="18.4" cy="469.85" r="1.6" fill="url(#rb)"/>
<path d="M7 491.50000000000006L17.4 481.50000000000006" stroke="#000" stroke-width="1.3"/>
<circle cx="6.8" cy="491.70000000000005" r="1.8" fill="url(#rb)"/>
<circle cx="17.6" cy="481.3" r="1.7" fill="url(#rb)"/>
<rect x="10" y="490.70000000000005" width="3" height="2.6" fill="#1080ff"/><rect x="13" y="490.70000000000005" width="3" height="2.6" fill="#8000a0"/><rect x="16" y="490.70000000000005" width="2.6" height="2.6" fill="#ff8040"/><rect x="18.6" y="490.70000000000005" width="2.4" height="2.6" fill="#20e020"/>
<path d="M7.6 505.35H19V512.15L13.5 517.75L7.6 511.95000000000005Z" fill="url(#gl)" stroke="#000" stroke-width="1.2"/><path d="M6 505.15000000000003H20.2" stroke="#900010" stroke-width="1.5"/>
<circle cx="7.5" cy="505.35" r="1.4" fill="url(#rb)"/>
<circle cx="19" cy="505.35" r="1.4" fill="url(#rb)"/>
<circle cx="7.3" cy="512.15" r="1.4" fill="url(#rb)"/>
<circle cx="19" cy="512.35" r="1.4" fill="url(#rb)"/>
<circle cx="13.5" cy="517.95" r="1.4" fill="url(#rb)"/>
<path d="M6 528.3000000000001L12.4 535.5000000000001M12 528.1000000000001L5.6 535.3000000000001M9 531.9000000000001L14 536.5000000000001" stroke="#900010" stroke-width="1.2"/>
<circle cx="14.6" cy="537.1000000000001" r="2" fill="url(#rb)"/>
<path d="M10.0 570.7L12.7 570.1L10.1 567.9Z" fill="#5a3a10"/>
<path d="M12.7 570.1L17.7 563.9L15.0 561.8L10.1 567.9Z" fill="#e6a800" stroke="#8a5a08" stroke-width="0.7"/>
<path d="M17.7 563.9L18.9 562.4L16.3 560.2L15.0 561.8Z" fill="#e07890"/>
<path d="M5 567.3Q6 574.8 9.5 573.8Q13.5 569.3 16 572.3Q18.5 576.3 21 576.9" fill="none" stroke="#000" stroke-width="1.3"/>
<rect x="6.6" y="586.6999999999999" width="12.8" height="10.6" fill="url(#gl)" stroke="#b85a30" stroke-width="1.2"/>
<g fill="#a03010"><rect x="11.8" y="588.3" width="2.5" height="7.8"/><rect x="10.2" y="588.0999999999999" width="5.7" height="1.4"/><rect x="10.2" y="594.8999999999999" width="5.7" height="1.4"/></g>
<path d="M8.3 608.9v3.8l3 -1.9Z" fill="#fff" stroke="#000" stroke-width="1.1"/><path d="M9.6 612.6999999999999L7 620.6999999999999M9.8 612.6999999999999L12.2 620.6999999999999" stroke="#000" stroke-width="1.1"/>
<circle cx="17.5" cy="611.3" r="1.9" fill="#fff" stroke="#1080f0" stroke-width="1.4"/><path d="M17.5 613.5V620.9" stroke="#000" stroke-width="1.5"/><path d="M6 621.5H19.6" stroke="#c06030" stroke-width="1.2"/>
<rect x="6.6" y="633.3" width="12.4" height="13" fill="url(#gl)" stroke="#a00000" stroke-width="1.3"/>
<rect x="6" y="632.6999999999999" width="11" height="1.6" fill="#1a2a90"/>
<path d="M8 637.1999999999999h6M8 639.9999999999999h5M8 642.9h6" stroke="#5a78d0" stroke-width="1"/>
<path d="M12.5 643.2L15.1 642.4L12.3 640.4Z" fill="#5a3a10"/>
<path d="M15.1 642.4L19.9 635.5L17.1 633.6L12.3 640.4Z" fill="#e6a800" stroke="#8a5a08" stroke-width="0.7"/>
<path d="M19.9 635.5L21.0 633.9L18.2 631.9L17.1 633.6Z" fill="#e07890"/>
<path d="M9.6 663.3L12.3 662.6L9.6 660.5Z" fill="#5a3a10"/>
<path d="M12.3 662.6L17.1 656.5L14.4 654.4L9.6 660.5Z" fill="#e6a800" stroke="#8a5a08" stroke-width="0.7"/>
<path d="M17.1 656.5L18.3 655.0L15.7 652.8L14.4 654.4Z" fill="#e07890"/>
<path d="M6 665.6999999999999Q8.5 668.6999999999999 11.5 666.6999999999999Q15 664.0999999999999 20 666.3" fill="none" stroke="#182878" stroke-width="1.6"/><path d="M6 665.6999999999999Q8.5 668.6999999999999 11.5 666.6999999999999Q15 664.0999999999999 20 666.3" fill="none" stroke="#d01020" stroke-width="1.6" stroke-dasharray="1.5 1.5"/>
<path d="M5 687.6999999999999L11.2 680.6999999999999H20M12.4 683.4999999999999H20" fill="none" stroke="#000" stroke-width="1.5"/>
<rect x="42.7" y="111.7" width="13" height="12.6" fill="#fff" stroke="#a00000" stroke-width="1.2"/>
<rect x="44.6" y="113.4" width="3" height="3" fill="#6aa0e0"/><rect x="49.6" y="113.4" width="4" height="3" fill="#6aa0e0"/><rect x="44.6" y="118.6" width="2" height="3.4" fill="#6aa0e0"/>
<rect x="46.9" y="117.4" width="11" height="9.2" fill="#e8f6ff" stroke="#a00000" stroke-width="1.2"/>
<path d="M49 120.4h6.6M49 122.4h6.6M51.4 124.4h2M54.2 124.4h2" stroke="#5a8ae0" stroke-width="0.9"/>
<path d="M73.8 112.3h4.4v3.8h4v4.4h-4v3.8h-4.4v-3.8h-4v-4.4h4Z" fill="#a8d6f8" stroke="#7a90b0" stroke-width="0.8"/>
<path d="M78.5 112.6v3.8h4v4.4h-4v4h-4.6M73.6 120.9h-4" fill="none" stroke="#a00010" stroke-width="1.1"/>
<rect x="95.4" y="116.2" width="12.6" height="4.2" fill="#a8d6f8" stroke="#7a90b0" stroke-width="0.8"/><path d="M95.2 120.8H108.4V116.2" fill="none" stroke="#a00010" stroke-width="1.1"/>
<path d="M130.8 121.6L135.3 126.3" stroke="#8a5a28" stroke-width="2.1" stroke-linecap="round"/><path d="M131.6 122.4L135.3 126.3" stroke="#e8a050" stroke-width="1.0" stroke-linecap="round"/>
<circle cx="126.5" cy="117.3" r="6" fill="url(#lens)" stroke="#747474" stroke-width="1.2"/>
<path d="M126.5 113v8.6M122.2 117.3h8.6" stroke="#900030" stroke-width="1.2"/><path d="M126.5 112l1.8 2.2h-3.6ZM126.5 122.6l1.8 -2.2h-3.6ZM121.2 117.3l2.2 -1.8v3.6ZM131.8 117.3l-2.2 -1.8v3.6Z" fill="#900060"/>
<path d="M146.4 113.5Q147.5 112 149 113.2L150 114.2Q151 112.6 152.4 113.6L153.2 114.6Q154.4 113.6 155.4 114.8L158.6 119.6L160 123.4L156 125.6Q152 125.4 150.4 123L147 121.4Q146.2 120.4 147.6 120L150 120.4L146.8 115.4Q146 114.4 146.4 113.5Z" fill="#e9a9ac" stroke="#b87078" stroke-width="0.6"/>
<path d="M148.4 114.4l3 4.2M150.8 114.4l2.6 3.8M153.4 115.2l2.2 3.2" stroke="#c88088" stroke-width="0.6"/>
<path d="M155.4 123.6L159.6 120.6L162.2 123V126.8H158Z" fill="#285898"/><path d="M154.6 122.6L158.8 119.8L159.8 120.8L155.6 123.8Z" fill="#fff"/>
<path d="M158.5 111.2v6.6M155.2 114.5h6.6" stroke="#a00010" stroke-width="1.2"/><path d="M158.5 111.4l3.1 3.1l-3.1 3.1l-3.1 -3.1Z" fill="none" stroke="#2a70c0" stroke-width="0.8" stroke-dasharray="1 1"/>
<path d="M181.3 120.4L186.3 125.8" stroke="#8a5a28" stroke-width="2.1" stroke-linecap="round"/><path d="M182.1 121.2L186.3 125.8" stroke="#e8a050" stroke-width="1.0" stroke-linecap="round"/>
<circle cx="177.3" cy="116.4" r="5.5" fill="url(#lens)" stroke="#747474" stroke-width="1.2"/>
<path d="M183.4 113.5h5M185.9 111v5M183.2 117.5h5.2" stroke="#a00010" stroke-width="1.1"/>
<path d="M208.8 121.6L213.3 126.3" stroke="#8a5a28" stroke-width="2.1" stroke-linecap="round"/><path d="M209.6 122.4L213.3 126.3" stroke="#e8a050" stroke-width="1.0" stroke-linecap="round"/>
<circle cx="204.5" cy="117.3" r="6" fill="url(#lens)" stroke="#747474" stroke-width="1.2"/>
<path d="M203.6 116.4h-2.2l2.2 -2.2ZM205.4 116.4h2.2l-2.2 -2.2ZM203.6 118.2h-2.2l2.2 2.2ZM205.4 118.2h2.2l-2.2 2.2Z" fill="#c00010"/><path d="M201 113.8l2 2M208 113.8l-2 2M201 120.8l2 -2M208 120.8l-2 -2" stroke="#c00010" stroke-width="0.9"/><rect x="203.9" y="116.7" width="1.3" height="1.3" fill="#000"/>
<path d="M234.2 120.4L238.8 125.8" stroke="#8a5a28" stroke-width="2.1" stroke-linecap="round"/><path d="M235.0 121.2L238.8 125.8" stroke="#e8a050" stroke-width="1.0" stroke-linecap="round"/>
<circle cx="230.4" cy="116.6" r="5.3" fill="url(#lens)" stroke="#747474" stroke-width="1.2"/>
<path d="M228.6 115.4h4.2l-3.6 4.4Z" fill="#c01020"/><path d="M231 114.6Q232.6 112.2 235.6 112.2" fill="none" stroke="#2060b0" stroke-width="1.4"/>
<path d="M251 114.9L254.5 118.9L261.6 111.9" fill="none" stroke="#a00010" stroke-width="1.7"/><path d="M250.3 114.1L254 118.2L260.9 111.2" fill="none" stroke="#a4dcfa" stroke-width="1.8"/>
<path d="M256.2 126.4L265.6 117.4M257.4 118.4L266 126.4" fill="none" stroke="#a00010" stroke-width="1.7"/><path d="M255.5 125.7L264.9 116.7M256.7 117.7L265.3 125.7" fill="none" stroke="#a4dcfa" stroke-width="1.8"/>
<path d="M277.4 115.6L284 122" stroke="#d88848" stroke-width="2.6" stroke-linecap="round"/><path d="M277 116.6L283 122.6" stroke="#7a4a20" stroke-width="0.8"/>
<path d="M283.4 121L286 123.6" stroke="#b8c0c8" stroke-width="3"/><path d="M285 121.6L287.6 123L290.6 126.4L286 125.6L284 123.6Z" fill="#181818"/>
<path d="M283.6 113.4h4.2l-3.8 4.6Z" fill="#c01020"/><path d="M286.2 114Q287.6 112 290.4 111.8" fill="none" stroke="#2060b0" stroke-width="1.4"/>
<path d="M306.4 118.4V111.8H311L313.4 114V118.4Z" fill="#eef6ff" stroke="#4a86e8" stroke-width="1"/><path d="M311 111.8V114H313.4" fill="none" stroke="#4a86e8" stroke-width="0.8"/>
<path d="M303.4 118.6L305.6 116.6H315.6L317 118V123.4L314.4 126H303.4Z" fill="#e0f2fa" stroke="#a00010" stroke-width="1.2"/>
<path d="M303.4 120.4H314.2M314.4 126V120.4L317 118" fill="none" stroke="#a00010" stroke-width="1"/>
<rect x="304" y="123.6" width="10" height="1.8" fill="#f0d030"/><rect x="304.6" y="121.2" width="1.6" height="1.3" fill="#10c020"/><rect x="307" y="121.2" width="1.6" height="1.3" fill="#e01020"/>
<path d="M328.4 122V113.2H336L338.2 115.2V122Z" fill="#fafdff" stroke="#3a6cc8" stroke-width="1.2"/>
<path d="M331.8 124.8V116.4H340.4L343 118.8V124.8Z" fill="url(#gl)" stroke="#a00010" stroke-width="1.3"/><path d="M340.4 116.4V118.8H343" fill="none" stroke="#a00010" stroke-width="0.9"/>
<rect x="355.7" y="112.5" width="13" height="12.8" fill="#c4dcec" stroke="#a00000" stroke-width="1.5"/>
<rect x="356.5" y="113.6" width="1.3" height="1.3" fill="#f0e020"/>
<rect x="356.5" y="116" width="1.3" height="1.3" fill="#f0e020"/>
<rect x="356.5" y="118.4" width="1.3" height="1.3" fill="#f0e020"/>
<rect x="356.5" y="120.8" width="1.3" height="1.3" fill="#f0e020"/>
<rect x="356.5" y="123.2" width="1.3" height="1.3" fill="#f0e020"/>
<rect x="360" y="113.4" width="3" height="3" fill="#182880"/><rect x="360.9" y="114.30000000000001" width="1.2" height="1.2" fill="#f0e020"/>
<rect x="364.8" y="113.4" width="3" height="3" fill="#182880"/><rect x="365.7" y="114.30000000000001" width="1.2" height="1.2" fill="#f0e020"/>
<rect x="360" y="117.6" width="3" height="3" fill="#182880"/><rect x="360.9" y="118.5" width="1.2" height="1.2" fill="#f0e020"/>
<rect x="364.8" y="117.6" width="3" height="3" fill="#182880"/><rect x="365.7" y="118.5" width="1.2" height="1.2" fill="#f0e020"/>
<rect x="362.4" y="121.4" width="3.2" height="3.2" fill="#f0e020" stroke="#182880" stroke-width="0.8"/>
<polygon points="388.0,111.4 390.4,116.4 395.8,117.1 391.8,120.8 392.8,126.2 388.0,123.6 383.2,126.2 384.2,120.8 380.2,117.1 385.6,116.4" fill="url(#star)" stroke="#d09a18" stroke-width="1" stroke-linejoin="round"/>
<polygon points="414.0,111.4 416.4,116.4 421.8,117.1 417.8,120.8 418.8,126.2 414.0,123.6 409.2,126.2 410.2,120.8 406.2,117.1 411.6,116.4" fill="#18a8e8" stroke="#d09a18" stroke-width="1" stroke-linejoin="round"/>
<rect x="432.5" y="112.5" width="15" height="12.6" fill="none" stroke="#d4d4d4" stroke-width="1"/><path d="M440.8 112.5V125M432.5 119.4H447.5" stroke="#d4d4d4" stroke-width="1"/>
<rect x="432.6" y="112.6" width="8" height="6.6" fill="#ececec" stroke="#404040" stroke-width="1.4"/>
<path d="M98.3 327.8L105.4 331.7L97.8 336.1L89.8 332.2Z" fill="url(#cubet)"/>
<path d="M89.8 332.2L97.8 336.1V346.8L89.8 342.2Z" fill="#fff"/>
<path d="M97.8 336.1L105.4 331.7V342.2L97.8 346.8Z" fill="#2f5a48"/>
<path d="M91.2 335.4l1.2 -.3v5M93.6 337.2q1.3 -.8 2.2 .6q.4 1.3 -2 3.4l2.6 1.3" fill="none" stroke="#e02038" stroke-width="1.1"/>
<path d="M99.6 342.2l1.4 -2l.8 1.2l1.8 -4" fill="none" stroke="#f0f4f0" stroke-width="1.1"/>
<rect x="349.2" y="368" width="1.9" height="8.6" fill="#1e5a9c"/><rect x="349.2" y="374.9" width="7.6" height="1.8" fill="#1e5a9c"/>
<path d="M346.4 374.6V379.5H351.6Z" fill="#cfe0f0" stroke="#1e5a9c" stroke-width="1.1"/>
<path d="M352.7 371v2.4h2.6" fill="none" stroke="#101010" stroke-width="1.1"/>
<rect x="358" y="365" width="3.1" height="15.6" fill="#f5c542"/><path d="M359.4 367h1.7M359.4 370h1.7M359.4 373h1.7M359.4 376h1.7M359.4 379h1.7" stroke="#8a6a10" stroke-width="0.8"/>
</svg>
</body></html>
